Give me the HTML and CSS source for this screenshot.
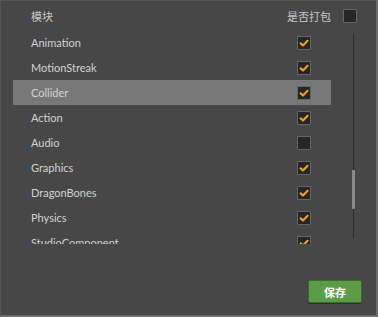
FILE: index.html
```html
<!DOCTYPE html>
<html>
<head>
<meta charset="utf-8">
<link rel="stylesheet" href="styles.css">
</head>
<body>
<div class="panel">
  <div class="header">
    <span class="title">模块</span>
    <span class="pack">是否打包</span>
    <span class="cb"></span>
  </div>
  <div class="body">
    <div class="list">
      <div class="row"><span class="name">Animation</span><span class="cb on"><svg viewBox="0 0 12 12"><path d="M2.6 6.4 L5 8.4 L9.6 3.8"/></svg></span></div>
      <div class="row"><span class="name">MotionStreak</span><span class="cb on"><svg viewBox="0 0 12 12"><path d="M2.6 6.4 L5 8.4 L9.6 3.8"/></svg></span></div>
      <div class="row sel"><span class="name">Collider</span><span class="cb on"><svg viewBox="0 0 12 12"><path d="M2.6 6.4 L5 8.4 L9.6 3.8"/></svg></span></div>
      <div class="row"><span class="name">Action</span><span class="cb on"><svg viewBox="0 0 12 12"><path d="M2.6 6.4 L5 8.4 L9.6 3.8"/></svg></span></div>
      <div class="row"><span class="name">Audio</span><span class="cb"></span></div>
      <div class="row"><span class="name">Graphics</span><span class="cb on"><svg viewBox="0 0 12 12"><path d="M2.6 6.4 L5 8.4 L9.6 3.8"/></svg></span></div>
      <div class="row"><span class="name">DragonBones</span><span class="cb on"><svg viewBox="0 0 12 12"><path d="M2.6 6.4 L5 8.4 L9.6 3.8"/></svg></span></div>
      <div class="row"><span class="name">Physics</span><span class="cb on"><svg viewBox="0 0 12 12"><path d="M2.6 6.4 L5 8.4 L9.6 3.8"/></svg></span></div>
      <div class="row"><span class="name">StudioComponent</span><span class="cb on"><svg viewBox="0 0 12 12"><path d="M2.6 6.4 L5 8.4 L9.6 3.8"/></svg></span></div>
    </div>
    <div class="scroll"><div class="thumb"></div></div>
  </div>
  <div class="footer">
    <button class="save">保存</button>
  </div>
</div>
</body>
</html>
```

FILE: styles.css
```css
html, body {
  margin: 0;
  padding: 0;
  background: #474747;
}
.panel {
  box-sizing: border-box;
  width: 378px;
  height: 317px;
  background: #474747;
  border-left: 1px solid #555;
  border-top: 1px solid #555;
  border-right: 2px solid #6c6c6c;
  border-bottom: 2px solid #6c6c6c;
  font-family: Lato, "Noto Sans CJK SC", sans-serif;
  color: #cfcfcf;
  display: flex;
  flex-direction: column;
}
.header {
  height: 29px;
  display: flex;
  align-items: center;
  padding-left: 30px;
  padding-right: 19px;
  font-family: "Noto Sans CJK SC", sans-serif;
  font-size: 11px;
  color: #c8c8c8;
}
.title {
  flex: 1;
}
.pack {
  margin-right: 12px;
}
.cb {
  box-sizing: border-box;
  width: 14px;
  height: 14px;
  border: 1px solid #666;
  border-radius: 1px;
  background: #262626;
  display: flex;
  align-items: center;
  justify-content: center;
  flex: none;
}
.cb svg {
  width: 12px;
  height: 12px;
}
.cb svg path {
  fill: none;
  stroke: #f0a02c;
  stroke-width: 2.1;
  stroke-linecap: round;
  stroke-linejoin: round;
}
.body {
  display: flex;
  padding-left: 12px;
  height: 215px;
}
.list {
  width: 318px;
  height: 214px;
  overflow: hidden;
}
.row {
  height: 25px;
  display: flex;
  align-items: center;
  padding-left: 18px;
  padding-right: 20px;
  font-size: 11px;
  color: #d2d2d2;
}
.row.sel {
  background: #787878;
}
.name {
  flex: 1;
}
.scroll {
  position: relative;
  width: 3px;
  height: 205px;
  margin-top: 3px;
  margin-left: 21px;
}
.scroll::before {
  content: "";
  position: absolute;
  left: 1px;
  top: 0;
  width: 1px;
  height: 100%;
  background: #2c2c2c;
}
.thumb {
  position: absolute;
  left: 0;
  top: 137px;
  width: 3px;
  height: 39px;
  background: #8a8a8a;
  border-radius: 1px;
}
.footer {
  flex: 1;
  display: flex;
  justify-content: flex-end;
  align-items: flex-start;
  padding-right: 14px;
}
.save {
  margin-top: 35px;
  width: 54px;
  height: 23px;
  background: #5d9c47;
  border: 1px solid #3e6a31;
  border-radius: 2px;
  color: #fff;
  font-family: "Noto Sans CJK SC", sans-serif;
  font-weight: bold;
  font-size: 11px;
  padding: 0;
  box-shadow: 0 1px 1px rgba(0,0,0,0.4);
}
```
